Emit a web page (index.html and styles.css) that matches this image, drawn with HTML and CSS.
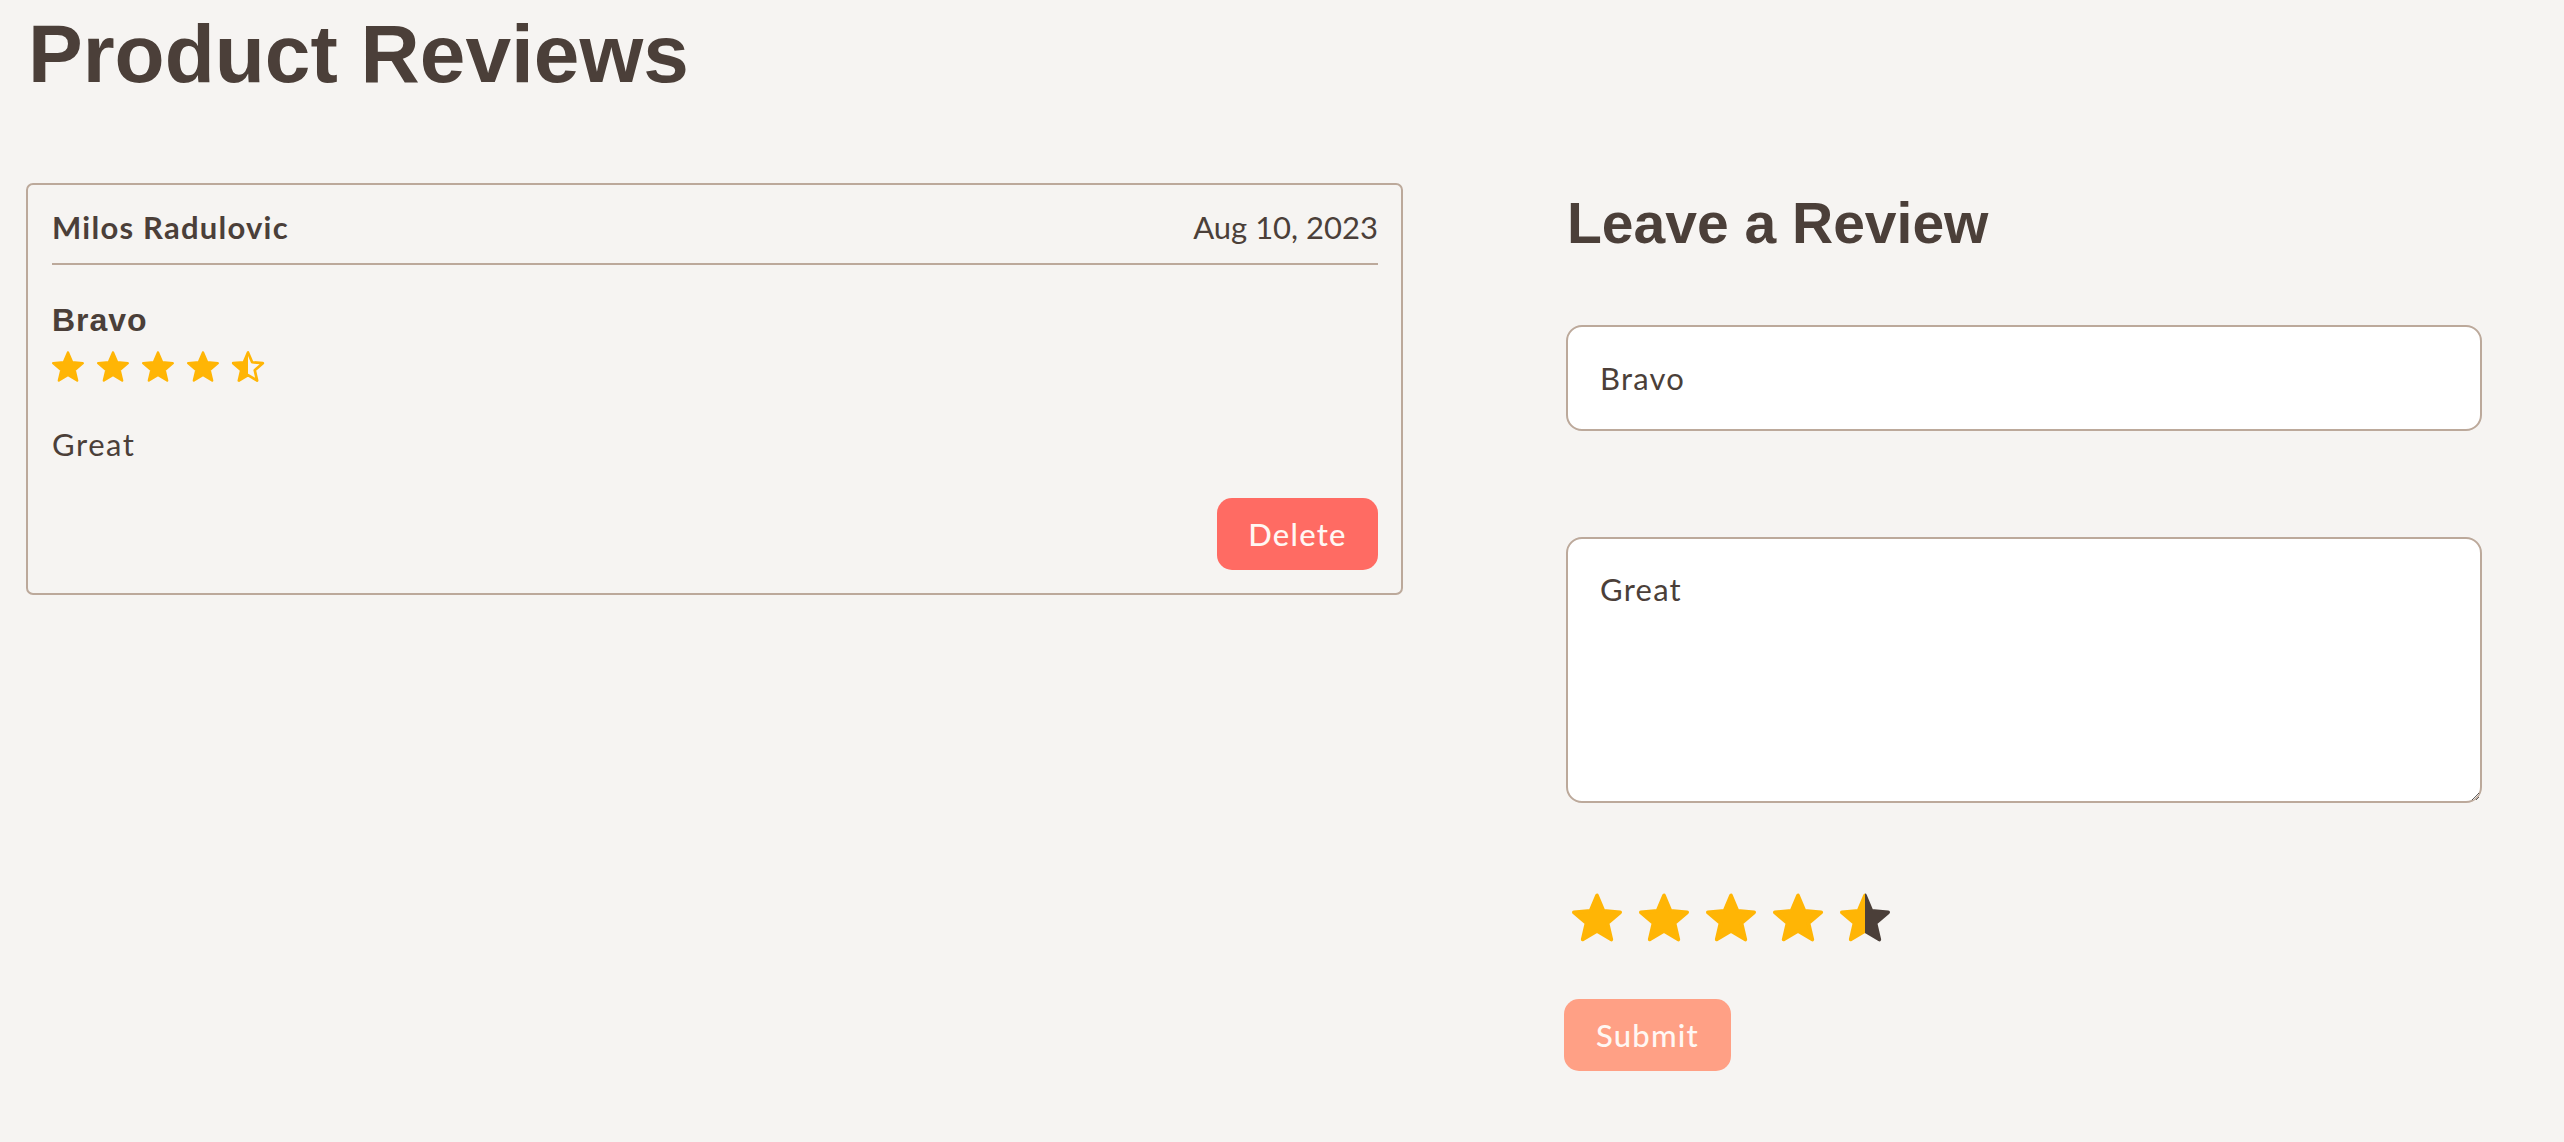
FILE: index.html
```html
<!DOCTYPE html>
<html lang="en">
<head>
<meta charset="utf-8">
<title>Product Reviews</title>
<link rel="stylesheet" href="styles.css">
</head>
<body>
<svg class="defs" width="0" height="0" aria-hidden="true">
  <defs>
    <path id="star" d="M12 17.27L18.18 21l-1.64-7.03L22 9.24l-7.19-.61L12 2 9.19 8.63 2 9.24l5.46 4.73L5.82 21z"/>
    <linearGradient id="halfOutline" x1="0" x2="1" y1="0" y2="0">
      <stop offset="0.5" stop-color="#ffb505"/>
      <stop offset="0.5" stop-color="#ffb505" stop-opacity="0"/>
    </linearGradient>
    <linearGradient id="halfDark" x1="0" x2="1" y1="0" y2="0">
      <stop offset="0.5" stop-color="#ffb505"/>
      <stop offset="0.5" stop-color="#4b3f39"/>
    </linearGradient>
  </defs>
</svg>
<div class="page">
  <h1 class="title">Product Reviews</h1>
  <div class="layout">
    <section class="reviews">
      <article class="card">
        <header class="card-head">
          <span class="author">Milos Radulovic</span>
          <span class="date">Aug 10, 2023</span>
        </header>
        <h3 class="review-title">Bravo</h3>
        <div class="stars stars-sm">
          <svg viewBox="1.2 1.2 21.6 20.6"><use href="#star" class="s-full"/></svg>
          <svg viewBox="1.2 1.2 21.6 20.6"><use href="#star" class="s-full"/></svg>
          <svg viewBox="1.2 1.2 21.6 20.6"><use href="#star" class="s-full"/></svg>
          <svg viewBox="1.2 1.2 21.6 20.6"><use href="#star" class="s-full"/></svg>
          <svg viewBox="1.2 1.2 21.6 20.6"><use href="#star" class="s-half-outline"/></svg>
        </div>
        <p class="review-body">Great</p>
        <div class="card-actions">
          <button class="btn btn-delete" type="button">Delete</button>
        </div>
      </article>
    </section>
    <section class="form-col">
      <h2 class="form-title">Leave a Review</h2>
      <form class="review-form">
        <input class="field field-input" type="text" value="Bravo">
        <textarea class="field field-text">Great</textarea>
        <div class="stars stars-lg">
          <svg viewBox="1.2 1.2 21.6 20.6"><use href="#star" class="s-full"/></svg>
          <svg viewBox="1.2 1.2 21.6 20.6"><use href="#star" class="s-full"/></svg>
          <svg viewBox="1.2 1.2 21.6 20.6"><use href="#star" class="s-full"/></svg>
          <svg viewBox="1.2 1.2 21.6 20.6"><use href="#star" class="s-full"/></svg>
          <svg viewBox="1.2 1.2 21.6 20.6"><use href="#star" class="s-half-dark"/></svg>
        </div>
        <div>
          <button class="btn btn-submit" type="button">Submit</button>
        </div>
      </form>
    </section>
  </div>
</div>
</body>
</html>
```
FILE: styles.css
```css
* { box-sizing: border-box; }

html, body {
  margin: 0;
  padding: 0;
  background: #f6f4f2;
  color: #4b3f39;
  font-family: "Lato", "Noto Sans", sans-serif;
}

.defs { position: absolute; width: 0; height: 0; overflow: hidden; }

.page {
  padding: 13px 26px 0 26px;
}

.title {
  margin: 0 0 0 2px;
  font-family: "Liberation Sans", Arial, sans-serif;
  font-weight: 700;
  font-size: 82px;
  line-height: 82px;
  height: 82px;
}

.layout {
  display: flex;
  align-items: flex-start;
  gap: 163px;
  margin-top: 88px;
}

.reviews {
  width: 1377px;
  flex: none;
}

.card {
  border: 2px solid #bca99b;
  border-radius: 7px;
  padding: 24px 23px 23px 24px;
}

.card-head {
  display: flex;
  justify-content: space-between;
  align-items: baseline;
  font-size: 31px;
  line-height: 37px;
  padding-bottom: 17px;
  border-bottom: 2px solid #bca99b;
}

.author { font-weight: 700; letter-spacing: 0.04em; }
.date { font-weight: 400; letter-spacing: 0; }

.review-title {
  margin: 37px 0 0 0;
  font-family: "Liberation Sans", Arial, sans-serif;
  font-weight: 700;
  font-size: 32px;
  line-height: 37px;
  letter-spacing: 0.03em;
}

.stars {
  display: flex;
}

.stars svg { display: block; overflow: visible; }

.stars-sm {
  gap: 13px;
  margin-top: 12px;
}
.stars-sm svg { width: 32px; height: 31px; }

.stars-lg {
  gap: 17px;
  margin-top: 90px;
  margin-left: 6px;
}
.stars-lg svg { width: 50px; height: 49px; }

.s-full {
  fill: #ffb505;
  stroke: #ffb505;
  stroke-width: 1.6;
  stroke-linejoin: round;
}

.s-half-outline {
  fill: url(#halfOutline);
  stroke: #ffb505;
  stroke-width: 1.8;
  stroke-linejoin: round;
}

.s-half-dark {
  fill: url(#halfDark);
  stroke: url(#halfDark);
  stroke-width: 1.6;
  stroke-linejoin: round;
}

.review-body {
  margin: 44px 0 0 0;
  font-size: 31px;
  line-height: 37px;
  letter-spacing: 0.05em;
}

.card-actions {
  display: flex;
  justify-content: flex-end;
  margin-top: 35px;
}

.btn {
  border: none;
  font-family: "Lato", "Noto Sans", sans-serif;
  font-size: 31px;
  font-weight: 500;
  letter-spacing: 0.04em;
  color: #fff7f3;
  height: 72px;
  border-radius: 15px;
  cursor: pointer;
}

.btn-delete {
  width: 161px;
  background: #ff6b63;
}

.btn-submit {
  width: 167px;
  margin-top: 57px;
  background: #ffa085;
  margin-left: -2px;
}

.form-col {
  width: 916px;
  flex: none;
  padding-top: 12px;
}

.form-title {
  margin: 0 0 0 1px;
  font-family: "Liberation Sans", Arial, sans-serif;
  font-weight: 700;
  font-size: 57px;
  line-height: 57px;
}

.review-form {
  display: flex;
  flex-direction: column;
  margin-top: 73px;
}

.field {
  width: 916px;
  border: 2px solid #bca99b;
  border-radius: 16px;
  background: #ffffff;
  color: #4b3f39;
  font-family: "Lato", "Noto Sans", sans-serif;
  font-size: 31px;
  letter-spacing: 0.04em;
  outline: none;
}

.field-input {
  height: 106px;
  padding: 0 32px;
}

.field-text {
  height: 266px;
  margin-top: 106px;
  padding: 32px;
  line-height: 37px;
  resize: both;
}
```
